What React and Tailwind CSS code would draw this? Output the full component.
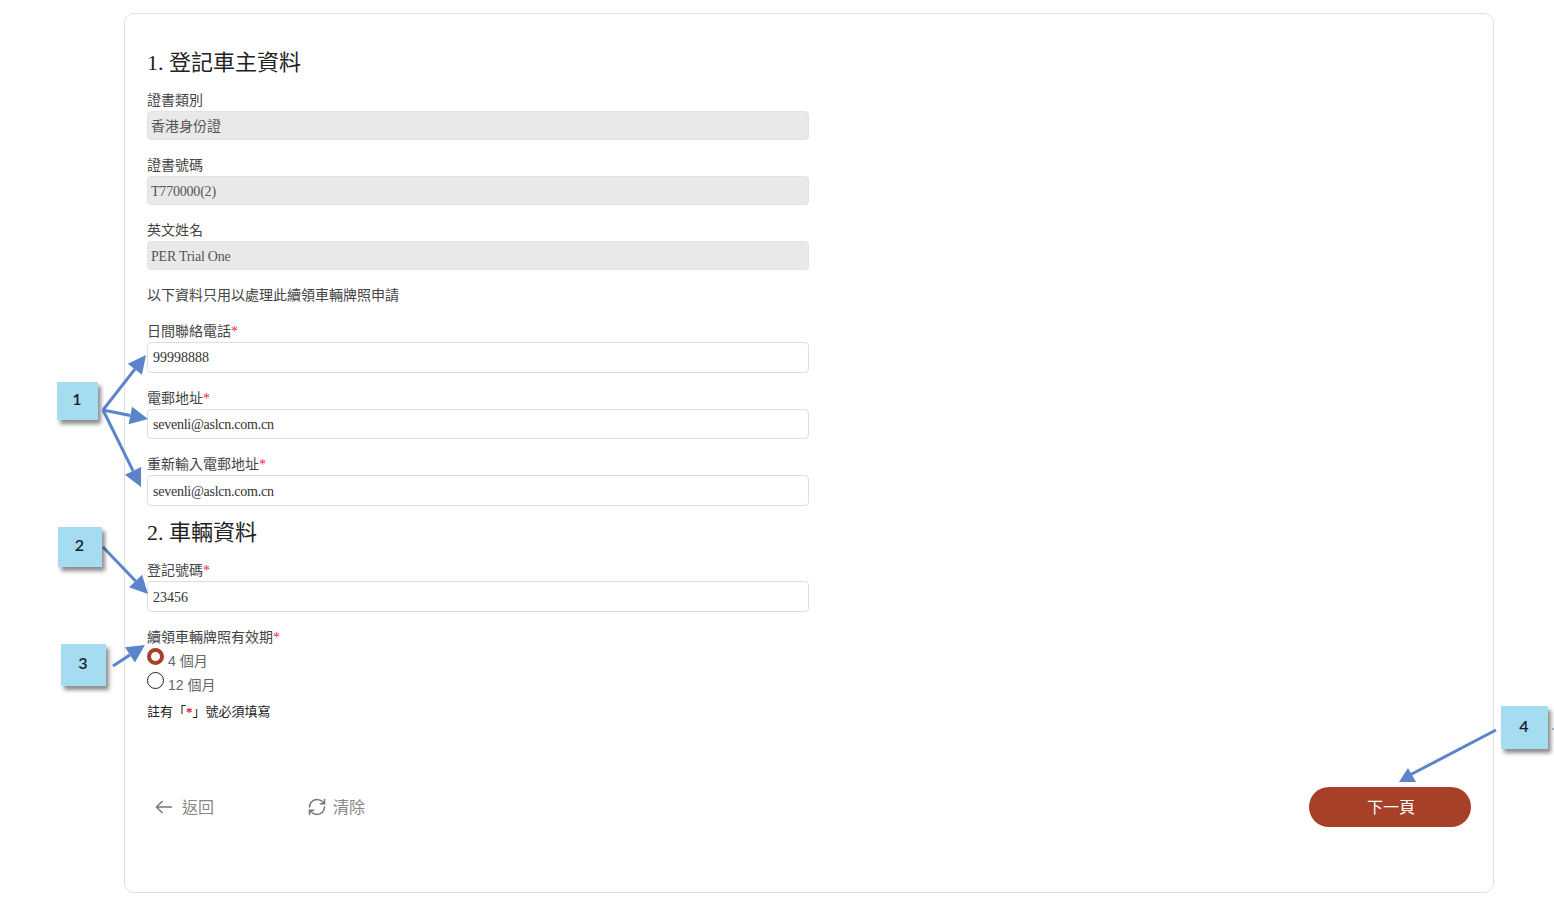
import { RefreshCw } from "lucide-react";

const serif = "font-['Liberation_Serif','Noto_Sans_CJK_TC',serif]";
const sans = "font-['Liberation_Sans','Noto_Sans_CJK_TC',sans-serif]";

function Req() {
  return <span className="text-[#f0284a]">*</span>;
}

function Field({ label, required, value, disabled, h, mb, tracking = "" }) {
  return (
    <div className={mb}>
      <label className="block h-[22px] pt-px text-sm leading-[22px] text-[#444]">
        {label}
        {required && <Req />}
      </label>
      <input
        readOnly
        value={value}
        className={
          disabled
            ? `block w-[662px] ${h} rounded-[4px] border border-[#e2e2e2] bg-[#e9e9e9] pl-[3px] text-sm ${tracking} text-[#555] outline-none`
            : `block w-[662px] ${h} rounded-[4px] border border-[#dedede] bg-white pl-[5px] text-sm ${tracking} text-[#333] outline-none`
        }
      />
    </div>
  );
}

function Callout({ n, className }) {
  return (
    <div
      className={`absolute flex items-center justify-center bg-[#a5dcf2] pr-px pb-1 font-['Lato',sans-serif] text-base font-semibold text-[#15222a] shadow-[3px_4px_4px_rgba(0,0,0,0.45)] ${className}`}
    >
      {n}
    </div>
  );
}

// annotation arrow, head is drawn from the tip backwards
function Arrow({ x1, y1, x2, y2 }) {
  const a = Math.atan2(y2 - y1, x2 - x1);
  const len = 18;
  const w = 9;
  const bx = x2 - len * Math.cos(a);
  const by = y2 - len * Math.sin(a);
  const px = -Math.sin(a) * w;
  const py = Math.cos(a) * w;
  return (
    <g>
      <line x1={x1} y1={y1} x2={bx} y2={by} stroke="#5b84cb" strokeWidth="3" />
      <polygon
        points={`${x2},${y2} ${bx + px},${by + py} ${bx - px},${by - py}`}
        fill="#5b84cb"
      />
    </g>
  );
}

export default function App() {
  return (
    <div className={`relative h-[917px] w-[1554px] overflow-hidden bg-white pt-[13px] pl-[124px] ${serif}`}>
      <div className="h-[880px] w-[1370px] rounded-[10px] border border-[#e0e0e0] bg-white pt-[32px] pl-[22px] pr-[22px]">
        <h2 className="mb-[11px] h-[32px] pt-px text-[22px] leading-[32px] text-[#222]">1. 登記車主資料</h2>

        <Field label="證書類別" value="香港身份證" disabled h="h-[29px] pb-[2px]" mb="mb-[14px]" />
        <Field label="證書號碼" value="T770000(2)" disabled h="h-[29px] pt-[2px]" mb="mb-[14px]" tracking="tracking-[-0.2px]" />
        <Field label="英文姓名" value="PER Trial One" disabled h="h-[29px] pt-[2px]" mb="mb-[14px]" tracking="tracking-[-0.23px]" />

        <p className="mb-[14px] h-[22px] pt-px text-sm leading-[22px] text-[#444]">以下資料只用以處理此續領車輛牌照申請</p>

        <Field label="日間聯絡電話" required value="99998888" h="h-[31px]" mb="mb-[14px]" />
        <Field label="電郵地址" required value="sevenli@aslcn.com.cn" h="h-[30px] pt-[2px]" mb="mb-[14px]" tracking="tracking-[-0.25px]" />
        <Field label="重新輸入電郵地址" required value="sevenli@aslcn.com.cn" h="h-[31px] pt-[2px]" tracking="tracking-[-0.25px]" />

        <h2 className="mt-[11px] mb-[10px] h-[32px] text-[22px] leading-[32px] text-[#222]">2. 車輛資料</h2>

        <Field label="登記號碼" required value="23456" h="h-[31px] pt-[2px]" mb="mb-[14px]" />

        <div className="h-[22px] pt-px text-sm leading-[22px] text-[#444]">
          續領車輛牌照有效期
          <Req />
        </div>
        <div className={`flex h-[24px] w-fit items-start ${sans} text-sm text-[#666]`}>
          <input
            type="radio"
            readOnly
            className="h-[17px] w-[17px] appearance-none rounded-full border-[4px] border-[#a64027] bg-white"
          />
          <span className="ml-[4px] mt-[3px] leading-[20px]">4 個月</span>
        </div>
        <div className={`flex h-[24px] w-fit items-start ${sans} text-sm text-[#666]`}>
          <input
            type="radio"
            readOnly
            className="h-[17px] w-[17px] appearance-none rounded-full border-[1.5px] border-[#222] bg-white"
          />
          <span className="ml-[4px] mt-[3px] leading-[20px]">12 個月</span>
        </div>
        <p className="mt-[6px] text-[13px] leading-[20px] text-[#222]">
          註有「<span className="font-bold text-[#e0102f]">*</span>」號必須填寫
        </p>

        <div className="mt-[65px] flex items-center justify-between">
          <div className="flex items-center">
            <button className="flex w-[161px] items-center gap-[9px] pl-[8px] text-base text-[#888]">
              <svg width="18" height="14" viewBox="0 0 18 14" fill="none" stroke="#777" strokeWidth="1.5">
                <path d="M17 7H1.5M7.5 1L1.5 7l6 6" />
              </svg>
              <span className="pt-px">返回</span>
            </button>
            <button className="flex items-center gap-[6px] text-base text-[#888]">
              <RefreshCw size={20} strokeWidth={1.9} className="-ml-[1px] text-[#777]" />
              <span className="pt-px">清除</span>
            </button>
          </div>
          <button className="h-[40px] w-[162px] rounded-full bg-[#a64027] pt-px pl-[2px] text-base text-white">下一頁</button>
        </div>
      </div>

      {/* annotations sitting on top of the form */}
      <svg className="pointer-events-none absolute inset-0 h-full w-full">
        <Arrow x1={103} y1={410} x2={146} y2={355} />
        <Arrow x1={103} y1={410} x2={148} y2={419} />
        <Arrow x1={103} y1={410} x2={141} y2={487} />
        <Arrow x1={103} y1={547} x2={148} y2={594} />
        <Arrow x1={113} y1={666} x2={145} y2={645} />
        <line x1={1496} y1={730} x2={1408} y2={776} stroke="#5b84cb" strokeWidth="3" />
        <polygon points="1408,768 1399,782 1416,782" fill="#5b84cb" />
        <line x1={1552} y1={729} x2={1554} y2={729} stroke="#5b84cb" strokeWidth="1" />
      </svg>
      <Callout n="1" className="left-[57px] top-[382px] h-[38px] w-[41px]" />
      <Callout n="2" className="left-[58px] top-[527px] h-[40px] w-[44px]" />
      <Callout n="3" className="left-[61px] top-[644px] h-[42px] w-[45px]" />
      <Callout n="4" className="left-[1501px] top-[706px] h-[43px] w-[47px]" />
    </div>
  );
}
